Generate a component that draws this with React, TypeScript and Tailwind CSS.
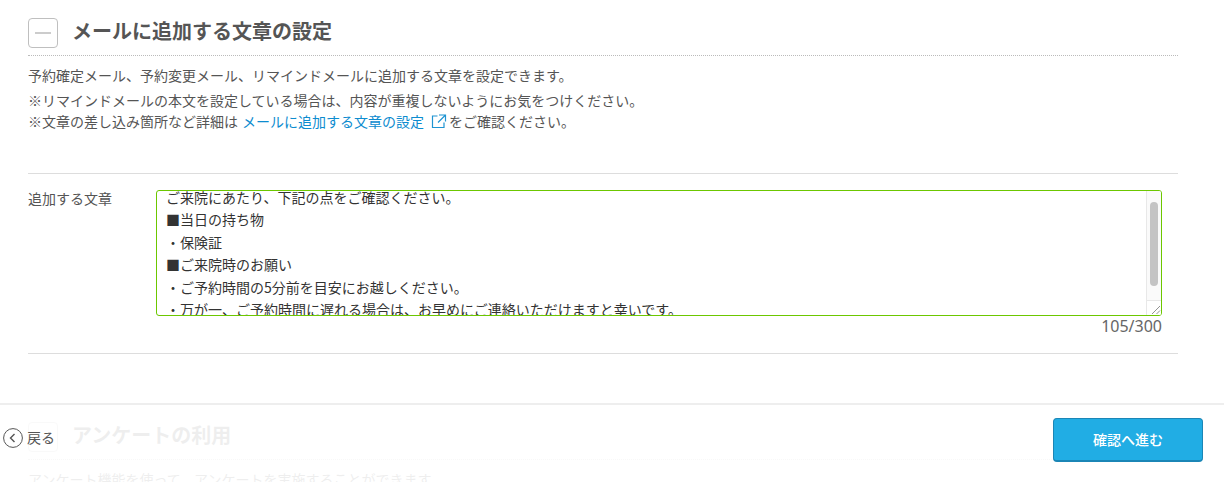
const font = "font-['Noto_Sans_CJK_JP','Noto_Sans',sans-serif]";

const lines = [
    'ご来院にあたり、下記の点をご確認ください。',
    '■当日の持ち物',
    '・保険証',
    '■ご来院時のお願い',
    '・ご予約時間の5分前を目安にお越しください。',
    '・万が一、ご予約時間に遅れる場合は、お早めにご連絡いただけますと幸いです。',
];

function SectionHead({ title }: { title: string }) {
    return (
        <div className="flex items-center gap-[15px] h-[38px] border-b border-dotted border-b-[#bbbbbb] pb-[7px]">
            <span className="w-[30px] h-[30px] border border-[#bfbfbf] rounded-[4px] flex items-center justify-center">
                <span className="w-[16px] h-[2px] bg-[#cccccc]"></span>
            </span>
            <h2 className="text-[20px] leading-[30px] font-bold text-[#555555] -ml-[1px] -mt-[5px]">{title}</h2>
        </div>
    );
}

function MessageBox() {
    return (
        <div className="w-[1006px] h-[126px] border border-[#6cc700] rounded-[3px] flex overflow-hidden bg-white">
            <div className="flex-1 overflow-hidden pl-[9px]">
                <div className="-mt-[5px] text-[14px] leading-[22.4px] text-[#333333]">
                    {lines.map((l) => (
                        <p key={l} className="whitespace-nowrap">{l}</p>
                    ))}
                </div>
            </div>
            <div className="w-[15px] border-l border-[#e8e8e8] bg-[#fafafa] flex flex-col">
                <div className="flex-1 pt-[11px] flex justify-center">
                    <div className="w-[8px] h-[84px] rounded-[4px] bg-[#c4c4c4]"></div>
                </div>
                <div className="h-[15px] border-t border-[#e8e8e8] bg-white flex items-end justify-end">
                    <svg width="10" height="10" viewBox="0 0 10 10" fill="none" stroke="#777777" strokeWidth="0.8">
                        <path d="M1 9 L9 1 M5.5 9 L9 5.5" />
                    </svg>
                </div>
            </div>
        </div>
    );
}

export default function App() {
    return (
        <div className={`relative w-[1224px] h-[482px] overflow-hidden bg-white ${font}`}>
            <div className="pl-[28px] pr-[46px] pt-[18px]">
                <SectionHead title="メールに追加する文章の設定" />
                <div className="pt-[8px] text-[14px] leading-[22px] text-[#555555]">
                    <p className="mb-[3px]">予約確定メール、予約変更メール、リマインドメールに追加する文章を設定できます。</p>
                    <p>※リマインドメールの本文を設定している場合は、内容が重複しないようにお気をつけください。</p>
                    <p className="flex items-center -mt-[1px]">
                        ※文章の差し込み箇所など詳細は
                        <span className="text-[#0d8ccf] ml-[4px]">メールに追加する文章の設定</span>
                        <svg className="ml-[7px] mr-[2px]" width="16" height="16" viewBox="0 0 16 16" fill="none" stroke="#1f94d2" strokeWidth="1.2">
                            <path d="M6.5 3 H1.5 V14.5 H13 V9.5" />
                            <path d="M8 2 H14.5 V8.5 M14.5 2 L7 9.5" />
                        </svg>
                        をご確認ください。
                    </p>
                </div>
                <div className="mt-[41px] border-t border-b border-[#dddddd] pt-[16px] pb-[17px]">
                    <div className="flex">
                        <div className="w-[128px] text-[14px] leading-[21px] text-[#555555] -mt-[2px]">追加する文章</div>
                        <div>
                            <MessageBox />
                            <div className="text-right text-[16px] leading-[20px] text-[#666666] font-['Noto_Sans',sans-serif]">105/300</div>
                        </div>
                    </div>
                </div>
                <div className="mt-[68px]">
                    <SectionHead title="アンケートの利用" />
                    <p className="pt-[8px] text-[14px] leading-[22px] text-[#555555]">アンケート機能を使って、アンケートを実施することができます。</p>
                </div>
            </div>
            <div className="absolute left-0 right-0 top-[403px] bottom-0 bg-white/90 border-t-2 border-[#eeeeee] flex items-center justify-between pl-[3px] pr-[21px] pb-[8px]">
                <a className="flex items-center gap-[4px] text-[14px] text-[#555555] -mt-[4px]">
                    <svg width="20" height="20" viewBox="0 0 20 20" fill="none" stroke="#555555">
                        <circle cx="10" cy="10" r="9.4" strokeWidth="1" />
                        <path d="M11.5 6 L7.5 10 L11.5 14" strokeWidth="1.4" />
                    </svg>
                    戻る
                </a>
                <button className="w-[150px] h-[44px] bg-[#21ade4] rounded-[4px] border border-[#1b86b6] border-b-2 text-white text-[14px] font-medium">
                    確認へ進む
                </button>
            </div>
        </div>
    );
}
